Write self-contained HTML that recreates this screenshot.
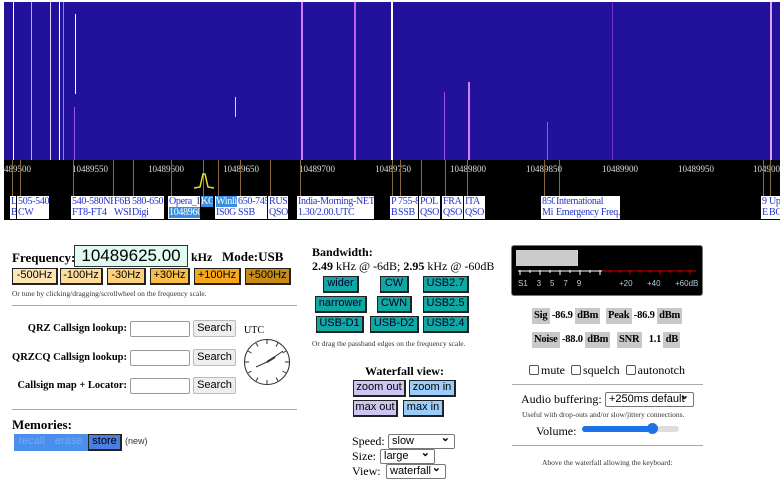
<!DOCTYPE html>
<html><head><meta charset="utf-8"><style>
*{margin:0;padding:0;box-sizing:border-box}
body{width:780px;height:470px;overflow:hidden;background:#fff;font-family:"Liberation Serif",serif;position:relative;white-space:nowrap}
.a{position:absolute;white-space:nowrap}
#wf{left:4px;top:2px;width:776px;height:158px;background:#22119a;overflow:hidden}
#sc{left:4px;top:160px;width:776px;height:60px;background:#000}
.ln{position:absolute;top:0;width:1px}
.tk{position:absolute;top:164px;font-size:9px;color:#ddd;font-family:"Liberation Serif",serif}
.bl{position:absolute;top:160px;width:1px;height:37px;background:#8a6a40}
.lb{position:absolute;top:196px;height:23px;background:#fff;color:#2233cc;font-size:10px;line-height:11px;padding-left:1px;overflow:hidden;letter-spacing:-0.3px;white-space:nowrap}
.hl{background:#3a8fe0;color:#fff}
.b{position:absolute;font-family:"Liberation Sans",sans-serif;font-size:11px;text-align:center;border:1px solid #222;border-right:2px solid #222;border-bottom:2px solid #222;line-height:13px}
.t{background:#10a8a0;color:#003}
.hr{position:absolute;height:1px;background:#aaa}
.s{font-size:7.5px;color:#333}
.in{position:absolute;border:1px solid #999;background:#fff;height:16px;border-radius:2px}
.sb{position:absolute;border:1px solid #bbb;background:#eee;font-family:"Liberation Sans",sans-serif;font-size:11px;text-align:center;height:17px;line-height:15px;border-radius:2px}
.g{position:absolute;background:#c8c8c8;font-size:10.5px;font-weight:bold;height:16px;line-height:16px;padding:0 2px;white-space:nowrap;letter-spacing:-0.2px}
.w{background:#fff;display:inline-block;padding:0 2px}
.sel{position:absolute;border:1px solid #777;border-radius:2px;font-family:"Liberation Sans",sans-serif;font-size:11px;height:15px;line-height:13px;padding-left:3px;background:#fff}
.sel:after{content:"⌄";position:absolute;right:4px;top:-3px;font-weight:bold}
.cb{display:inline-block;width:10px;height:10px;border:1px solid #555;border-radius:2px;vertical-align:-1px;margin-right:2px}
.ql{position:absolute;width:125px;left:2px;text-align:right;font-size:10.5px;font-weight:bold}
</style></head><body>
<div id="wf" class="a">
<div class="ln" style="left:9px;height:158px;background:#fff"></div>
<div class="ln" style="left:27px;height:158px;background:#e8c8ff;opacity:.8"></div>
<div class="ln" style="left:46px;height:158px;background:#e8c8ff"></div>
<div class="ln" style="left:55px;height:158px;background:#fff"></div>
<div class="ln" style="left:59px;height:158px;background:#c060ff"></div>
<div class="ln" style="left:71px;top:12px;height:80px;background:#fff"></div>
<div class="ln" style="left:70px;top:105px;height:53px;background:#a050f0"></div>
<div class="ln" style="left:231px;top:95px;height:20px;background:#e8c8ff"></div>
<div class="ln" style="left:297px;width:2px;height:158px;background:#d080ff"></div>
<div class="ln" style="left:350px;width:2px;height:158px;background:#c060f0"></div>
<div class="ln" style="left:387px;width:2px;height:158px;background:#fff"></div>
<div class="ln" style="left:440px;top:90px;height:68px;background:#a050f0"></div>
<div class="ln" style="left:464px;top:80px;width:2px;height:78px;background:#d080ff"></div>
<div class="ln" style="left:543px;top:120px;height:38px;background:#a050f0"></div>
<div class="ln" style="left:608px;top:0;height:158px;background:#6a30d0"></div>
<div class="ln" style="left:766px;width:2px;height:158px;background:#e0a0ff"></div>
</div>
<div id="sc" class="a"></div>
<div class="tk" style="left:4px">489500</div>
<div class="tk" style="left:72px">10489550</div>
<div class="tk" style="left:148px">10489600</div>
<div class="tk" style="left:223px">10489650</div>
<div class="tk" style="left:299px">10489700</div>
<div class="tk" style="left:375px">10489750</div>
<div class="tk" style="left:450px">10489800</div>
<div class="tk" style="left:526px">10489850</div>
<div class="tk" style="left:602px">10489900</div>
<div class="tk" style="left:678px">10489950</div>
<div class="tk" style="left:753px">10490000</div>
<div class="bl" style="left:12px"></div><div class="bl" style="left:20px"></div><div class="bl" style="left:73px"></div><div class="bl" style="left:113px"></div><div class="bl" style="left:133px"></div><div class="bl" style="left:171px"></div><div class="bl" style="left:203px"></div><div class="bl" style="left:218px"></div><div class="bl" style="left:240px"></div><div class="bl" style="left:270px"></div><div class="bl" style="left:300px"></div><div class="bl" style="left:392px"></div><div class="bl" style="left:400px"></div><div class="bl" style="left:421px"></div><div class="bl" style="left:445px"></div><div class="bl" style="left:467px"></div><div class="bl" style="left:544px"></div><div class="bl" style="left:559px"></div><div class="bl" style="left:763px"></div><div class="bl" style="left:770px"></div>
<svg class="a" style="left:193px;top:170px" width="22" height="20"><path d="M1 18 L7 17 L10 4 L12 4 L15 17 L21 18" stroke="#e8e020" stroke-width="1.5" fill="none"/></svg>
<div class="lb" style="left:10px;width:6px">L<br>B</div>
<div class="lb" style="left:17px;width:32px">505-540<br>CW</div>
<div class="lb" style="left:71px;width:42px">540-580NE<br>FT8-FT4</div>
<div class="lb" style="left:113px;width:18px">F6B<br>WSE</div>
<div class="lb" style="left:131px;width:33px">580-650<br>Digi</div>
<div class="lb" style="left:168px;width:32px">Opera_I<br><span class="hl">1048960</span></div>
<div class="lb" style="left:200px;width:13px;background:none"><span class="hl">KG</span></div>
<div class="lb" style="left:215px;width:22px"><span class="hl">Winli</span><br>IS0G</div>
<div class="lb" style="left:237px;width:30px">650-745<br>SSB</div>
<div class="lb" style="left:268px;width:20px">RUS<br>QSO</div>
<div class="lb" style="left:297px;width:77px">India-Morning-NET<br>1.30/2.00.UTC</div>
<div class="lb" style="left:390px;width:7px">P<br>B</div>
<div class="lb" style="left:397px;width:21px">755-8<br>SSB</div>
<div class="lb" style="left:419px;width:21px">POL<br>QSO</div>
<div class="lb" style="left:442px;width:21px">FRA<br>QSO</div>
<div class="lb" style="left:464px;width:21px">ITA<br>QSO</div>
<div class="lb" style="left:541px;width:14px">850<br>Mi</div>
<div class="lb" style="left:555px;width:65px">International<br>Emergency Freq.</div>
<div class="lb" style="left:761px;width:7px">9<br>E</div>
<div class="lb" style="left:768px;width:12px">Up<br>BC</div>

<!-- left -->
<div class="a" style="left:12px;top:250px;font-size:13px;font-weight:bold">Frequency:</div>
<div class="a" style="left:74px;top:245px;width:114px;height:22px;border:1px solid #333;background:#e2fbf0;font-family:'Liberation Sans',sans-serif;font-size:17px;text-align:center;line-height:20px">10489625.00</div>
<div class="a" style="left:191px;top:250px;font-size:12px;font-weight:bold">kHz</div>
<div class="a" style="left:222px;top:249px;font-size:13px;font-weight:bold">Mode:USB</div>
<div class="b" style="left:12px;top:268px;width:46px;height:17px;background:#fde6b4">-500Hz</div>
<div class="b" style="left:60px;top:268px;width:43px;height:17px;background:#fcdc98">-100Hz</div>
<div class="b" style="left:107px;top:268px;width:39px;height:17px;background:#fbd07c">-30Hz</div>
<div class="b" style="left:150px;top:268px;width:40px;height:17px;background:#fbbc44">+30Hz</div>
<div class="b" style="left:194px;top:268px;width:47px;height:17px;background:#f7a818">+100Hz</div>
<div class="b" style="left:245px;top:268px;width:46px;height:17px;background:#c88a14">+500Hz</div>
<div class="a s" style="left:12px;top:289px">Or tune by clicking/dragging/scrollwheel on the frequency scale.</div>
<div class="hr" style="left:12px;top:305px;width:285px"></div>
<div class="ql" style="top:323px">QRZ Callsign lookup:</div>
<div class="ql" style="top:352px">QRZCQ Callsign lookup:</div>
<div class="ql" style="top:380px">Callsign map + Locator:</div>
<div class="in" style="left:130px;top:321px;width:60px"></div>
<div class="in" style="left:130px;top:350px;width:60px"></div>
<div class="in" style="left:130px;top:378px;width:60px"></div>
<div class="sb" style="left:193px;top:320px;width:43px">Search</div>
<div class="sb" style="left:193px;top:349px;width:43px">Search</div>
<div class="sb" style="left:193px;top:377px;width:43px">Search</div>
<div class="a" style="left:244px;top:325px;font-size:10px">UTC</div>
<svg class="a" style="left:243px;top:338px" width="48" height="48"><circle cx="24" cy="24" r="22.5" fill="#fff" stroke="#333" stroke-width="1"/><g stroke="#333"><path d="M24 2v4M24 42v4M2 24h4M42 24h4M35 5l-2 3.5M13 5l2 3.5M43 13l-3.5 2M5 13l3.5 2M43 35l-3.5-2M5 35l3.5-2M35 43l-2-3.5M13 43l2-3.5"/><path d="M24 24L40 13" stroke-width="1"/><path d="M24 24L32 19" stroke-width="2"/><path d="M24 24L13 29" stroke-width="1"/></g></svg>
<div class="hr" style="left:12px;top:409px;width:285px"></div>
<div class="a" style="left:12px;top:417px;font-size:13px;font-weight:bold">Memories:</div>
<div class="b" style="left:14px;top:434px;width:36px;height:17px;background:#4a8eee;color:#7aaaee;border-color:#4a8eee">recall</div>
<div class="b" style="left:50px;top:434px;width:38px;height:17px;background:#4a8eee;color:#7aaaee;border-color:#4a8eee">erase</div>
<div class="b" style="left:88px;top:434px;width:34px;height:17px;background:#4a7ee0">store</div>
<div class="a" style="left:125px;top:436px;font-size:9px;font-family:'Liberation Sans',sans-serif;color:#333">(new)</div>

<!-- middle -->
<div class="a" style="left:312px;top:245px;font-size:12px;font-weight:bold">Bandwidth:</div>
<div class="a" style="left:312px;top:259px;font-size:12px"><b>2.49</b> kHz @ -6dB; <b>2.95</b> kHz @ -60dB</div>
<div class="b t" style="left:323px;top:276px;width:36px;height:17px">wider</div>
<div class="b t" style="left:380px;top:276px;width:29px;height:17px">CW</div>
<div class="b t" style="left:423px;top:276px;width:46px;height:17px">USB2.7</div>
<div class="b t" style="left:315px;top:296px;width:52px;height:17px">narrower</div>
<div class="b t" style="left:377px;top:296px;width:35px;height:17px">CWN</div>
<div class="b t" style="left:423px;top:296px;width:46px;height:17px">USB2.5</div>
<div class="b t" style="left:316px;top:316px;width:48px;height:17px">USB-D1</div>
<div class="b t" style="left:370px;top:316px;width:49px;height:17px">USB-D2</div>
<div class="b t" style="left:423px;top:316px;width:46px;height:17px">USB2.4</div>
<div class="a s" style="left:312px;top:339px">Or drag the passband edges on the frequency scale.</div>
<div class="a" style="left:365px;top:364px;font-size:12px;font-weight:bold">Waterfall view:</div>
<div class="b" style="left:353px;top:380px;width:53px;height:17px;background:#ccc6f2">zoom out</div>
<div class="b" style="left:409px;top:380px;width:47px;height:17px;background:#9ccdfa">zoom in</div>
<div class="b" style="left:353px;top:400px;width:45px;height:17px;background:#ccc6f2">max out</div>
<div class="b" style="left:403px;top:400px;width:41px;height:17px;background:#9ccdfa">max in</div>
<div class="a" style="left:352px;top:434px;font-size:12px">Speed:</div>
<div class="sel" style="left:388px;top:434px;width:67px">slow</div>
<div class="a" style="left:352px;top:449px;font-size:12px">Size:</div>
<div class="sel" style="left:380px;top:449px;width:55px">large</div>
<div class="a" style="left:352px;top:464px;font-size:12px">View:</div>
<div class="sel" style="left:386px;top:464px;width:60px">waterfall</div>

<!-- right -->
<div class="a" style="left:511px;top:245px;width:192px;height:51px;background:#000;border:1px solid #777;border-radius:3px"></div>
<div class="a" style="left:516px;top:250px;width:62px;height:16px;background:#ccc;border-right:1px solid #ee0"></div>
<svg class="a" style="left:516px;top:270px" width="185" height="8"><path d="M2 1H86" stroke="#fff"/><path d="M86 1H180" stroke="#c00"/><g stroke="#fff"><path d="M4 0v5M14 0v3M24 0v5M34 0v3M44 0v5M54 0v3M64 0v5M74 0v3M84 0v5"/></g><g stroke="#c00"><path d="M94 0v3M104 0v3M114 0v5M124 0v3M134 0v3M144 0v5M154 0v3M164 0v3M174 0v5"/></g></svg>
<div class="a" style="left:518px;top:279px;font-size:8px;color:#ccc;font-family:'Liberation Sans',sans-serif;word-spacing:0">S1&nbsp;&nbsp;&nbsp;&nbsp;3&nbsp;&nbsp;&nbsp;&nbsp;5&nbsp;&nbsp;&nbsp;&nbsp;7&nbsp;&nbsp;&nbsp;&nbsp;9</div>
<div class="a" style="left:619px;top:279px;font-size:8px;color:#acd;font-family:'Liberation Sans',sans-serif">+20</div>
<div class="a" style="left:647px;top:279px;font-size:8px;color:#acd;font-family:'Liberation Sans',sans-serif">+40</div>
<div class="a" style="left:675px;top:279px;font-size:8px;color:#acd;font-family:'Liberation Sans',sans-serif">+60dB</div>
<div class="g" style="left:532px;top:308px">Sig <span class="w">-86.9</span> dBm</div>
<div class="g" style="left:606px;top:308px">Peak <span class="w">-86.9</span> dBm</div>
<div class="g" style="left:532px;top:332px">Noise <span class="w">-88.0</span> dBm</div>
<div class="g" style="left:617px;top:332px">SNR <span class="w">&nbsp;&nbsp;1.1</span> dB</div>
<div class="a" style="left:529px;top:363px;font-size:12px"><span class="cb"></span>mute <span class="cb" style="margin-left:3px"></span>squelch <span class="cb" style="margin-left:3px"></span>autonotch</div>
<div class="hr" style="left:512px;top:384px;width:191px"></div>
<div class="a" style="left:521px;top:392px;font-size:12px">Audio buffering:</div>
<div class="sel" style="left:605px;top:392px;width:89px;height:15px">+250ms default</div>
<div class="a s" style="left:522px;top:410px">Useful with drop-outs and/or slow/jittery connections.</div>
<div class="a" style="left:536px;top:424px;font-size:12px">Volume:</div>
<div class="a" style="left:582px;top:426px;width:97px;height:6px;background:#ddd;border-radius:3px"></div>
<div class="a" style="left:582px;top:426px;width:72px;height:6px;background:#1a73e8;border-radius:3px"></div>
<div class="a" style="left:647px;top:423px;width:11px;height:11px;background:#1a73e8;border-radius:50%"></div>
<div class="hr" style="left:512px;top:445px;width:191px"></div>
<div class="a s" style="left:542px;top:458px">Above the waterfall allowing the keyboard:</div>
</body></html>
